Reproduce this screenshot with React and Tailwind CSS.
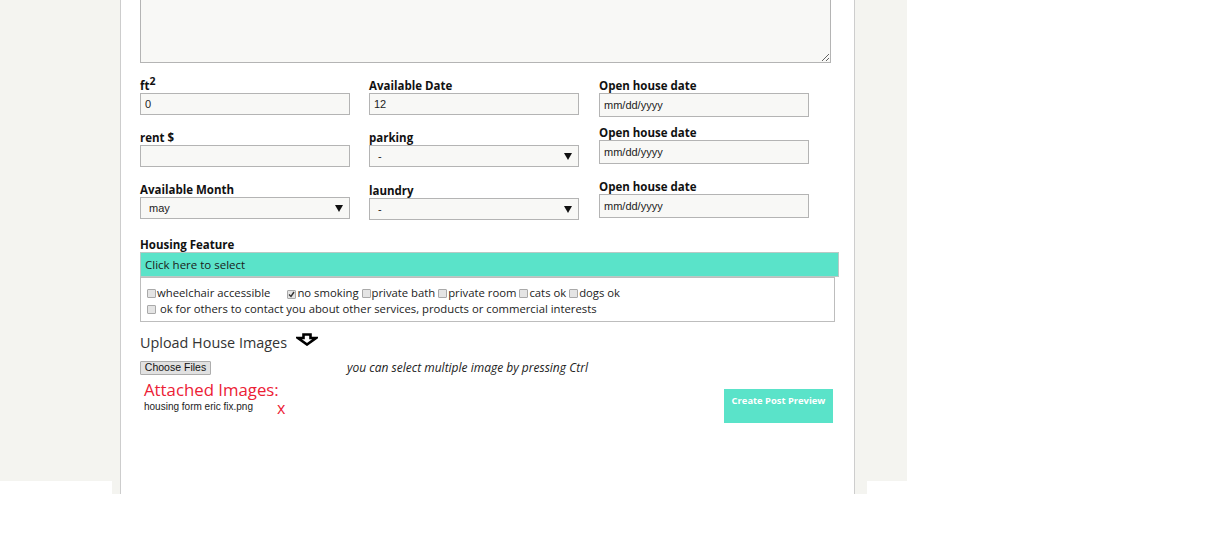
import React from "react";

const segoe = "font-['Open_Sans','Noto_Sans',sans-serif]";
const arial = "font-['Liberation_Sans',Arial,sans-serif]";

function Label({ children, className = "" }) {
  return (
    <div className={`h-[15px] leading-[15px] text-[11.5px] font-bold text-[#111] whitespace-nowrap ${segoe} ${className}`}>
      {children}
    </div>
  );
}

function TextBox({ value, tall = false, className = "" }) {
  return (
    <div
      className={`w-[210px] ${tall ? "h-[24px]" : "h-[22px]"} bg-[#f8f8f6] border border-[#b4b4b4] pl-[4px] flex items-center text-[11px] text-[#222] ${arial} ${className}`}
    >
      {value}
    </div>
  );
}

function SelectBox({ value, className = "" }) {
  return (
    <div
      className={`w-[210px] h-[22px] bg-[#f8f8f6] border border-[#b4b4b4] pl-[8px] pr-[6px] flex items-center justify-between text-[11px] text-[#222] ${arial} ${className}`}
    >
      <span>{value}</span>
      <svg width="8" height="7" viewBox="0 0 8 7">
        <path d="M0 0 H8 L4 7 Z" fill="#111" />
      </svg>
    </div>
  );
}

function Check({ checked = false }) {
  return (
    <span className="inline-flex items-center justify-center w-[9px] h-[9px] border border-[#a9a9a9] bg-[#e4e4e4] rounded-[1px] align-[-1px] mr-[1px]">
      {checked && (
        <svg width="7" height="7" viewBox="0 0 7 7">
          <path d="M1 3.5 L3 5.5 L6 1" stroke="#333" strokeWidth="1.4" fill="none" />
        </svg>
      )}
    </span>
  );
}

export default function App() {
  return (
    <div className="w-[1224px] h-[560px] bg-white overflow-hidden">
      <div className="w-[907px] h-[481px] bg-[#f4f4f0] flow-root">
        <div className="ml-[112px] w-[755px] h-[494px] bg-[#f4f4f0] pl-[8px] pr-[12px] flow-root">
          <div className="h-full bg-white border-l border-r border-[#cdcdcd] pl-[19px] flow-root">
            <textarea
              readOnly
              className="block -mt-[30px] w-[691px] h-[93px] bg-[#f8f8f6] border border-[#b4b4b4] resize-y outline-none"
            />

            <div className="mt-[15px] flex">
              <div className="w-[229px] flex flex-col">
                <Label>
                  ft<span className="relative -top-[5px] text-[10.5px] leading-none">2</span>
                </Label>
                <TextBox value="0" />
                <Label className="mt-[15px]">rent $</Label>
                <TextBox value="" />
                <Label className="mt-[15px]">Available Month</Label>
                <SelectBox value="may" />
              </div>
              <div className="w-[230px] flex flex-col">
                <Label>Available Date</Label>
                <TextBox value="12" />
                <Label className="mt-[15px]">parking</Label>
                <SelectBox value="-" />
                <Label className="mt-[16px]">laundry</Label>
                <SelectBox value="-" />
              </div>
              <div className="w-[210px] flex flex-col">
                <Label>Open house date</Label>
                <TextBox value="mm/dd/yyyy" tall />
                <Label className="mt-[8px]">Open house date</Label>
                <TextBox value="mm/dd/yyyy" tall />
                <Label className="mt-[15px]">Open house date</Label>
                <TextBox value="mm/dd/yyyy" tall />
              </div>
            </div>

            <Label className="mt-[17px]">Housing Feature</Label>
            <div className={`w-[699px] h-[25px] bg-[#5ae3c9] border border-[#b9c9c5] pl-[4px] flex items-center text-[11.5px] text-[#1a1a1a] ${segoe}`}>
              Click here to select
            </div>
            <div className={`w-[695px] border border-[#bdbdbd] pl-[6px] pt-[7px] pb-[4px] text-[11.3px] leading-[16px] text-[#222] ${segoe}`}>
              <div className="whitespace-nowrap">
                <Check />wheelchair accessible
                <span className="ml-[17px]"><Check checked />no smoking</span>{" "}
                <Check />private bath <Check />private room <Check />cats ok <Check />dogs ok
              </div>
              <div className="whitespace-nowrap">
                <Check /> ok for others to contact you about other services, products or commercial interests
              </div>
            </div>

            <div className="mt-[11px] flex items-start">
              <div className={`h-[20px] leading-[20px] text-[14.4px] text-[#333] ${segoe}`}>
                Upload House Images
              </div>
              <svg className="ml-[9px]" width="22" height="13" viewBox="0 0 22 13">
                <path
                  d="M7.5 1.5 H14.5 V5 H20 L11 11.5 L2 5 H7.5 Z"
                  fill="white"
                  stroke="#000"
                  strokeWidth="2.6"
                  strokeLinejoin="miter"
                />
              </svg>
            </div>

            <div className="mt-[6px] flex items-center">
              <div className={`w-[71px] h-[14px] bg-[#e1e1e1] border border-[#adadad] rounded-[1px] flex items-center justify-center text-[10.5px] text-[#111] ${arial}`}>
                Choose Files
              </div>
              <div className={`ml-[136px] text-[12px] italic text-[#222] ${segoe}`}>
                you can select multiple image by pressing Ctrl
              </div>
            </div>

            <div className="mt-[2px] flex items-start justify-between w-[694px]">
              <div className="pl-[4px]">
                <div className={`h-[22px] leading-[22px] text-[16.8px] text-[#ec2035] ${segoe}`}>
                  Attached Images:
                </div>
                <div className="flex items-start">
                  <div className={`h-[12px] leading-[12px] text-[10px] text-[#222] ${arial}`}>
                    housing form eric fix.png
                  </div>
                  <div className={`ml-[24px] -mt-[1px] leading-[16px] text-[16px] text-[#ec2035] ${segoe}`}>
                    x
                  </div>
                </div>
              </div>
              <div className={`mt-[10px] mr-[1px] w-[109px] h-[34px] bg-[#5ae3c9] pt-[5px] text-center text-[9.4px] font-bold text-white ${segoe}`}>
                Create Post Preview
              </div>
            </div>
          </div>
        </div>
      </div>
    </div>
  );
}
